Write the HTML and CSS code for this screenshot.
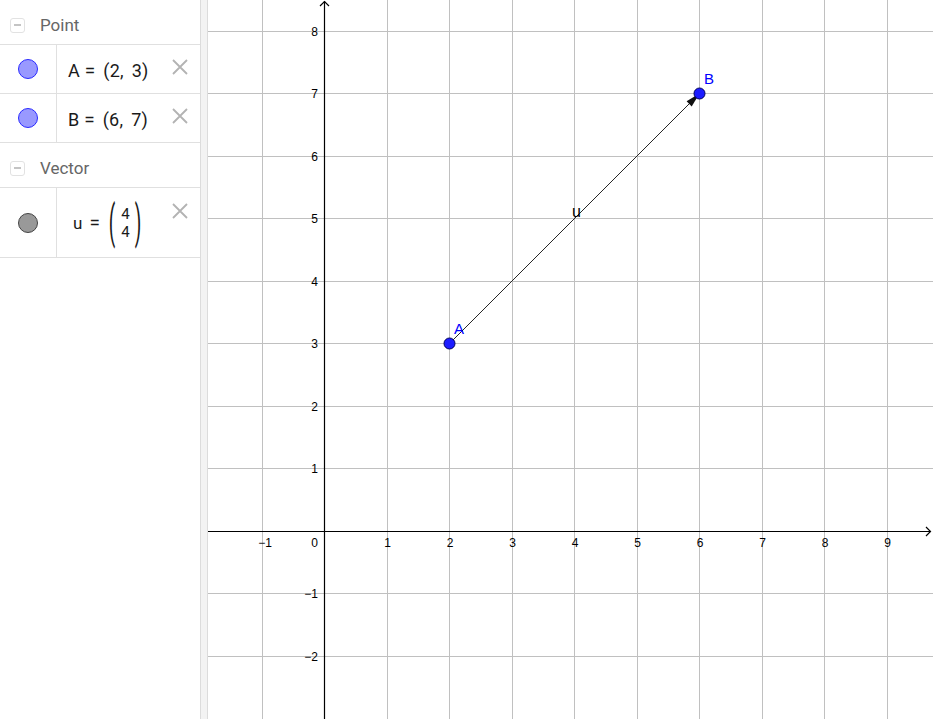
FILE: index.html
```html
<!DOCTYPE html>
<html>
<head>
<meta charset="utf-8">
<link rel="stylesheet" href="styles.css">
</head>
<body>
<div class="app">
  <div class="panel">
    <div class="group-header">
      <span class="toggle"><span class="toggle-bar"></span></span>
      <span class="group-title">Point</span>
    </div>
    <div class="row">
      <div class="icon-cell"><span class="dot dot-blue"></span></div>
      <div class="value"><span>A</span><span class="eq">=</span><span class="coords">(2, 3)</span></div>
      <div class="close"><svg width="16" height="16" viewBox="0 0 16 16"><path d="M1 1L15 15M15 1L1 15" stroke="#b3b3b3" stroke-width="1.8"/></svg></div>
    </div>
    <div class="row">
      <div class="icon-cell"><span class="dot dot-blue"></span></div>
      <div class="value"><span>B</span><span class="eq">=</span><span class="coords">(6, 7)</span></div>
      <div class="close"><svg width="16" height="16" viewBox="0 0 16 16"><path d="M1 1L15 15M15 1L1 15" stroke="#b3b3b3" stroke-width="1.8"/></svg></div>
    </div>
    <div class="group-header">
      <span class="toggle"><span class="toggle-bar"></span></span>
      <span class="group-title">Vector</span>
    </div>
    <div class="row row-tall">
      <div class="icon-cell"><span class="dot dot-gray"></span></div>
      <div class="value value-vec">
        <span class="vec-name">u</span><span class="eq eq-vec">=</span>
        <span class="matrix">
          <span class="paren">(</span>
          <span class="col"><span>4</span><span>4</span></span>
          <span class="paren">)</span>
        </span>
      </div>
      <div class="close close-vec"><svg width="16" height="16" viewBox="0 0 16 16"><path d="M1 1L15 15M15 1L1 15" stroke="#b3b3b3" stroke-width="1.8"/></svg></div>
    </div>
  </div>
  <div class="splitter"></div>
  <div class="graph">
    <svg width="725" height="719" viewBox="208 0 725 719">
      <g stroke="#c0c0c0" stroke-width="1" shape-rendering="crispEdges">
        <line x1="262.5" y1="0" x2="262.5" y2="719"/>
        <line x1="387.5" y1="0" x2="387.5" y2="719"/>
        <line x1="449.5" y1="0" x2="449.5" y2="719"/>
        <line x1="512.5" y1="0" x2="512.5" y2="719"/>
        <line x1="574.5" y1="0" x2="574.5" y2="719"/>
        <line x1="637.5" y1="0" x2="637.5" y2="719"/>
        <line x1="699.5" y1="0" x2="699.5" y2="719"/>
        <line x1="762.5" y1="0" x2="762.5" y2="719"/>
        <line x1="824.5" y1="0" x2="824.5" y2="719"/>
        <line x1="887.5" y1="0" x2="887.5" y2="719"/>
        <line x1="208" y1="31.5" x2="933" y2="31.5"/>
        <line x1="208" y1="93.5" x2="933" y2="93.5"/>
        <line x1="208" y1="156.5" x2="933" y2="156.5"/>
        <line x1="208" y1="218.5" x2="933" y2="218.5"/>
        <line x1="208" y1="281.5" x2="933" y2="281.5"/>
        <line x1="208" y1="343.5" x2="933" y2="343.5"/>
        <line x1="208" y1="406.5" x2="933" y2="406.5"/>
        <line x1="208" y1="468.5" x2="933" y2="468.5"/>
        <line x1="208" y1="593.5" x2="933" y2="593.5"/>
        <line x1="208" y1="656.5" x2="933" y2="656.5"/>
      </g>
      <g stroke="#000" stroke-width="1.2" fill="none">
        <line x1="324.5" y1="1" x2="324.5" y2="719"/>
        <line x1="208" y1="531.5" x2="931" y2="531.5"/>
        <path d="M320 6L324.5 1.5L329 6"/>
        <path d="M926 527L930.5 531.5L926 536"/>
      </g>
      <g class="tick" font-size="12" fill="#000">
        <text x="318" y="36" text-anchor="end">8</text>
        <text x="318" y="98" text-anchor="end">7</text>
        <text x="318" y="161" text-anchor="end">6</text>
        <text x="318" y="223" text-anchor="end">5</text>
        <text x="318" y="286" text-anchor="end">4</text>
        <text x="318" y="348" text-anchor="end">3</text>
        <text x="318" y="411" text-anchor="end">2</text>
        <text x="318" y="473" text-anchor="end">1</text>
        <text x="318" y="598" text-anchor="end">−1</text>
        <text x="318" y="661" text-anchor="end">−2</text>
        <text x="318" y="547" text-anchor="end">0</text>
        <text x="265" y="547" text-anchor="middle">−1</text>
        <text x="387.5" y="547" text-anchor="middle">1</text>
        <text x="450" y="547" text-anchor="middle">2</text>
        <text x="512.5" y="547" text-anchor="middle">3</text>
        <text x="575" y="547" text-anchor="middle">4</text>
        <text x="637.5" y="547" text-anchor="middle">5</text>
        <text x="700" y="547" text-anchor="middle">6</text>
        <text x="762.5" y="547" text-anchor="middle">7</text>
        <text x="825" y="547" text-anchor="middle">8</text>
        <text x="887.5" y="547" text-anchor="middle">9</text>
      </g>
      <line x1="449.5" y1="343.5" x2="692" y2="101" stroke="#262626" stroke-width="1"/>
      <path d="M699.5 93.5L686.6 101.3L691.7 106.4Z" fill="#111"/>
      <g class="label" font-size="15">
        <text x="454" y="334" fill="#0000ff">A</text>
        <text x="704" y="84" fill="#0000ff">B</text>
        <text x="572" y="217" fill="#000" font-size="16">u</text>
      </g>
      <circle cx="449.5" cy="343.5" r="5.5" fill="#1c1cff" stroke="#00005a" stroke-width="1"/>
      <circle cx="699.5" cy="93.5" r="5.5" fill="#1c1cff" stroke="#00005a" stroke-width="1"/>
    </svg>
  </div>
</div>
</body>
</html>
```
FILE: styles.css
```css
html, body {
  margin: 0;
  padding: 0;
  background: #fff;
}
body {
  width: 933px;
  height: 719px;
  overflow: hidden;
  font-family: Roboto, "Liberation Sans", sans-serif;
}
.app {
  display: flex;
  height: 719px;
}
.panel {
  width: 201px;
  box-sizing: border-box;
  border-right: 1px solid #dcdcdc;
  flex: none;
}
.splitter {
  width: 7px;
  box-sizing: border-box;
  background: #f3f3f3;
  border-right: 1px solid #dcdcdc;
  flex: none;
}
.graph {
  flex: none;
  width: 725px;
  height: 719px;
}
.graph svg {
  display: block;
}
.tick {
  font-family: "Liberation Sans", Arial, sans-serif;
}
.label {
  font-family: "Liberation Sans", Arial, sans-serif;
}
.group-header {
  height: 45px;
  box-sizing: border-box;
  padding-top: 6px;
  padding-left: 10px;
  border-bottom: 1px solid #e0e0e0;
  display: flex;
  align-items: center;
}
.toggle {
  width: 15px;
  height: 15px;
  box-sizing: border-box;
  border: 1px solid #e2e2e2;
  border-radius: 3px;
  display: flex;
  align-items: center;
  justify-content: center;
}
.toggle-bar {
  width: 7px;
  height: 2px;
  background: #c4c4c4;
}
.group-title {
  margin-left: 15px;
  font-size: 17px;
  color: #666;
}
.row {
  height: 49px;
  box-sizing: border-box;
  border-bottom: 1px solid #e0e0e0;
  display: flex;
}
.row-tall {
  height: 70px;
}
.icon-cell {
  width: 57px;
  box-sizing: border-box;
  border-right: 1px solid #e0e0e0;
  display: flex;
  align-items: center;
  justify-content: center;
  padding-right: 1px;
}
.dot {
  width: 20px;
  height: 20px;
  box-sizing: border-box;
  border-radius: 50%;
}
.dot-blue {
  background: #9999ff;
  border: 1px solid #2a2aff;
}
.dot-gray {
  background: #999;
  border: 1px solid #444;
}
.value {
  flex: 1;
  display: flex;
  align-items: center;
  padding-left: 11px;
  font-size: 18px;
  color: #1a1a1a;
  padding-top: 2px;
}
.coords {
  word-spacing: 3px;
  letter-spacing: 0.3px;
}
.eq {
  margin: 0 8px 0 5px;
  font-size: 19px;
}
.value-vec {
  padding-left: 16px;
  padding-top: 0;
}
.vec-name {
  font-size: 17px;
}
.eq-vec {
  margin: 0 9px 0 7px;
}
.matrix {
  display: flex;
  align-items: center;
}
.paren {
  display: inline-block;
  font-size: 19px;
  transform: scaleY(2.4);
  line-height: 1;
}
.col {
  display: flex;
  flex-direction: column;
  align-items: center;
  font-size: 15px;
  line-height: 18px;
  margin: 0 5px 0 6px;
}
.close {
  width: 28px;
  flex: none;
  padding-top: 14px;
}
.close-vec {
  padding-top: 15px;
}
.close svg {
  display: block;
}
```
